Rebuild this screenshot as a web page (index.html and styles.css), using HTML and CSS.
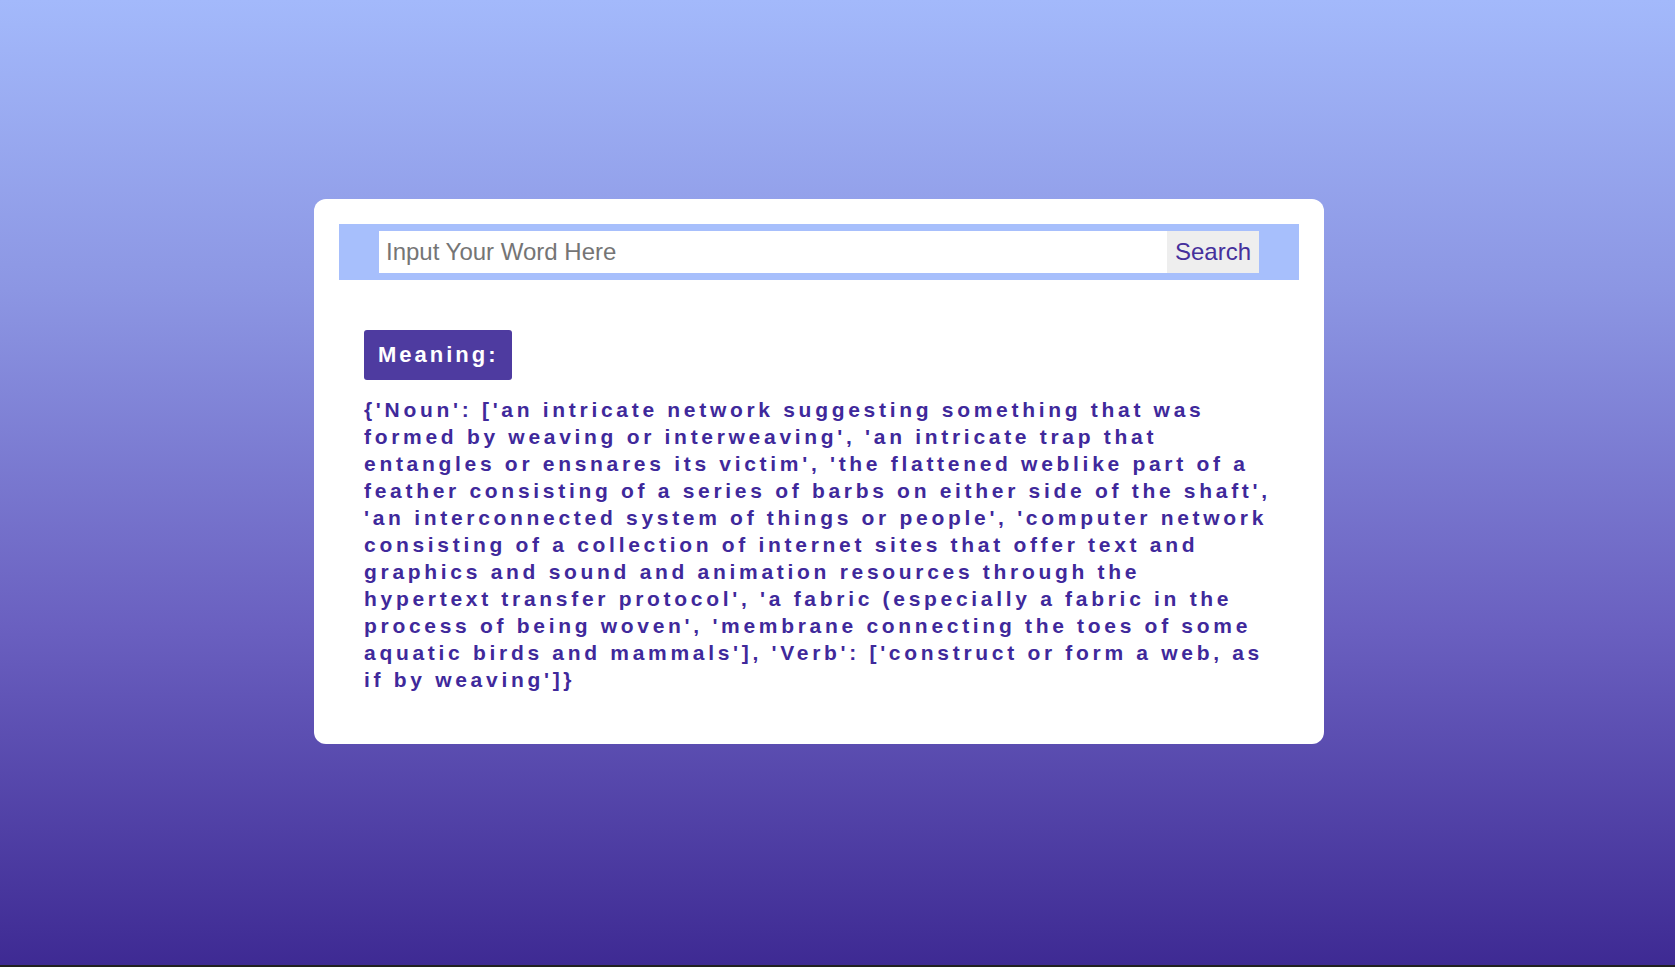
FILE: index.html
```html
<!DOCTYPE html>
<html lang="en">
<head>
<meta charset="utf-8">
<title>Dictionary</title>
<link rel="stylesheet" href="styles.css">
</head>
<body>
<main class="page">
  <section class="card">
    <form class="search-bar">
      <input class="search-input" type="text" placeholder="Input Your Word Here">
      <button class="search-button" type="button">Search</button>
    </form>
    <div class="result">
      <div class="badge">Meaning:</div>
      <p class="meaning">{'Noun': ['an intricate network suggesting something that was formed by weaving or interweaving', 'an intricate trap that entangles or ensnares its victim', 'the flattened weblike part of a feather consisting of a series of barbs on either side of the shaft', 'an interconnected system of things or people', 'computer network consisting of a collection of internet sites that offer text and graphics and sound and animation resources through the hypertext transfer protocol', 'a fabric (especially a fabric in the process of being woven', 'membrane connecting the toes of some aquatic birds and mammals'], 'Verb': ['construct or form a web, as if by weaving']}</p>
    </div>
  </section>
</main>
</body>
</html>
```

FILE: styles.css
```css
html {
  background: #212121;
}
body {
  margin: 0;
  font-family: "Liberation Sans", Arial, sans-serif;
}
.page {
  height: 965px;
  box-sizing: border-box;
  padding: 199px 0 0 314px;
  background: linear-gradient(to bottom, #a3b9fb 0%, #8c96e3 30%, #6a60c0 65%, #3e2a93 100%);
}
.card {
  width: 1010px;
  box-sizing: border-box;
  padding: 25px;
  background: #ffffff;
  border-radius: 12px;
}
.search-bar {
  display: flex;
  margin: 0;
  padding: 7px 40px;
  background: #a7bffc;
}
.search-input {
  flex: 1;
  height: 42px;
  box-sizing: border-box;
  border: none;
  outline: none;
  padding: 0 7px;
  font-family: "Liberation Sans", Arial, sans-serif;
  font-size: 24px;
  color: #333;
  background: #ffffff;
}
.search-input::placeholder {
  color: #757575;
}
.search-button {
  width: 92px;
  height: 42px;
  border: none;
  padding: 0 7px;
  background: #eeeeee;
  color: #45309c;
  font-family: "Liberation Sans", Arial, sans-serif;
  font-size: 24px;
}
.result {
  padding: 50px 25px 26px 25px;
}
.badge {
  display: inline-block;
  padding: 12px 13px 12px 14px;
  line-height: 26px;
  background: #4e3ba0;
  color: #ffffff;
  border-radius: 3px;
  font-size: 22px;
  font-weight: bold;
  letter-spacing: 3px;
}
.meaning {
  margin: 16px 0 0 0;
  font-size: 21px;
  line-height: 27px;
  font-weight: bold;
  letter-spacing: 3.7px;
  color: #3f299b;
}
```
